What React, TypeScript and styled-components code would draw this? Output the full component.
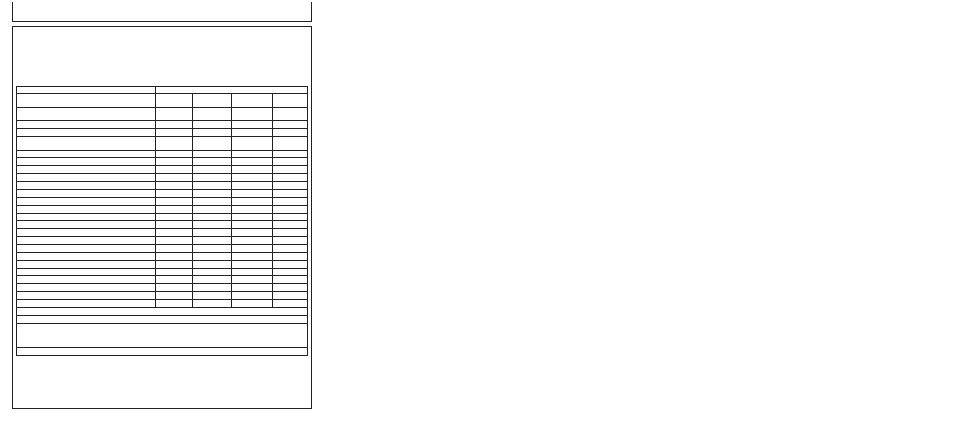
import React from "react";
import styled, { createGlobalStyle } from "styled-components";

const GlobalStyle = createGlobalStyle`
  html, body {
    margin: 0;
    padding: 0;
    background: #ffffff;
    font-family: "Liberation Sans", Arial, sans-serif;
  }
`;

const LINE = "#222222";

const Page = styled.div`
  padding: 2px 0 0 12px;
  width: 300px;
`;

const TopBox = styled.div`
  box-sizing: border-box;
  height: 20px;
  border: 1px solid ${LINE};
  border-top: none;
`;

const Panel = styled.div`
  box-sizing: border-box;
  margin-top: 4px;
  height: 383px;
  padding: 59px 3px 0 3px;
  border: 1px solid ${LINE};
`;

const Grid = styled.table`
  border-collapse: separate;
  border-spacing: 0;
  table-layout: fixed;
  width: 292px;
  border-top: 1px solid ${LINE};
  border-left: 1px solid ${LINE};
  font-size: 0;
  line-height: 0;
`;

const Cell = styled.td<{ $h: number }>`
  box-sizing: border-box;
  height: ${(p) => p.$h}px;
  padding: 0;
  border-right: 1px solid ${LINE};
  border-bottom: 1px solid ${LINE};
`;

// column widths, each including its right border
const cols = [139, 37, 39, 41, 35];

// heights of the five-column body rows, bottom border included
const bodyRows = [
  14, 13, 8, 8, 14, 7, 8, 8, 8, 8, 8, 8, 8, 7, 8, 8, 8, 8, 8, 8, 7, 8, 8, 8, 8,
];

// full-width rows under the grid
const footRows = [8, 8, 24, 8];

export default function App() {
  return (
    <>
      <GlobalStyle />
      <Page>
        <TopBox />
        <Panel>
          <Grid>
            <colgroup>
              {cols.map((w, i) => (
                <col key={i} style={{ width: w }} />
              ))}
            </colgroup>
            <tbody>
              <tr>
                <Cell $h={7} />
                <Cell $h={7} colSpan={4} />
              </tr>
              {bodyRows.map((h, r) => (
                <tr key={`b${r}`}>
                  {cols.map((_, c) => (
                    <Cell key={c} $h={h} />
                  ))}
                </tr>
              ))}
              {footRows.map((h, r) => (
                <tr key={`f${r}`}>
                  <Cell $h={h} colSpan={5} />
                </tr>
              ))}
            </tbody>
          </Grid>
        </Panel>
      </Page>
    </>
  );
}
